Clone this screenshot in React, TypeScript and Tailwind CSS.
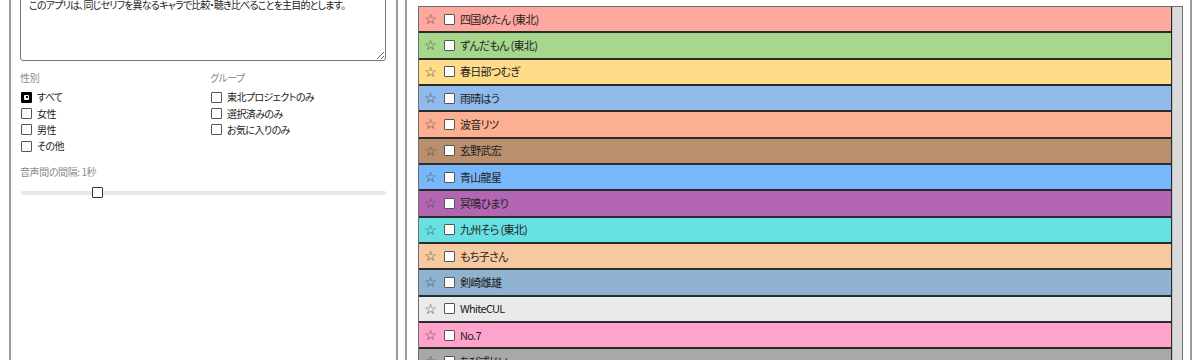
import React from "react";

const rows: { name: string; bg: string }[] = [
  { name: "四国めたん (東北)", bg: "bg-[#ffa8a0]" },
  { name: "ずんだもん (東北)", bg: "bg-[#a6d78d]" },
  { name: "春日部つむぎ", bg: "bg-[#ffdc87]" },
  { name: "雨晴はう", bg: "bg-[#8fbaea]" },
  { name: "波音リツ", bg: "bg-[#fdb091]" },
  { name: "玄野武宏", bg: "bg-[#b8906f]" },
  { name: "青山龍星", bg: "bg-[#78b7fa]" },
  { name: "冥鳴ひまり", bg: "bg-[#b266b2]" },
  { name: "九州そら (東北)", bg: "bg-[#66e0e0]" },
  { name: "もち子さん", bg: "bg-[#f7c9a0]" },
  { name: "剣崎雌雄", bg: "bg-[#8fb2d1]" },
  { name: "WhiteCUL", bg: "bg-[#eaeaea]" },
  { name: "No.7", bg: "bg-[#ffa3cc]" },
  { name: "ちび式じい", bg: "bg-[#a8a8a8]" },
  { name: "櫻歌ミコ", bg: "bg-[#ffb3c6]" },
];

const font =
  "font-['Noto_Sans_CJK_JP','Noto_Sans',sans-serif] [font-feature-settings:'palt']";

function Box({ checked = false }: { checked?: boolean }) {
  if (checked) {
    return (
      <span className="flex h-[11px] w-[11px] shrink-0 items-center justify-center rounded-[1px] bg-black">
        <span className="flex h-[5px] w-[5px] items-center justify-center rounded-[1px] bg-white">
          <span className="h-[2px] w-[2px] bg-black" />
        </span>
      </span>
    );
  }
  return (
    <span className="block h-[11px] w-[11px] shrink-0 rounded-[1px] border border-[#555] bg-white" />
  );
}

function Opt({ label, checked }: { label: string; checked?: boolean }) {
  return (
    <div className="flex h-[16.4px] items-center gap-[5px] pl-[1px]">
      <Box checked={checked} />
      <span className="text-[10px] leading-none tracking-[-0.6px] text-[#222]">{label}</span>
    </div>
  );
}

export default function App() {
  return (
    <div className={`h-[360px] w-[1200px] overflow-hidden bg-white ${font}`}>
      <div className="-mt-[20px] flex gap-[7px] pl-[9px] pr-[8px]">
        {/* Left panel */}
        <div className="h-[420px] w-[389px] shrink-0 border-2 border-[#9b9b9b] bg-white pl-[9px] pr-[10px] pt-[12px]">
          <textarea
            readOnly
            value="このアプリは、同じセリフを異なるキャラで比較・聴き比べることを主目的とします。"
            className={`block h-[67px] w-full resize-y rounded-[3px] border border-[#767676] bg-white px-[8px] py-[2px] text-[10px] leading-[16px] tracking-[-0.8px] text-[#222] outline-none ${font}`}
          />
          <div className="mt-[10px] grid grid-cols-[190px_1fr]">
            <div>
              <div className="h-[14px] text-[10px] leading-[14px] tracking-[-0.3px] text-[#8a8a8a]">性別</div>
              <div className="mt-[4px]">
                <Opt label="すべて" checked />
                <Opt label="女性" />
                <Opt label="男性" />
                <Opt label="その他" />
              </div>
            </div>
            <div>
              <div className="h-[14px] text-[10px] leading-[14px] tracking-[-0.6px] text-[#8a8a8a]">グループ</div>
              <div className="mt-[4px]">
                <Opt label="東北プロジェクトのみ" />
                <Opt label="選択済みのみ" />
                <Opt label="お気に入りのみ" />
              </div>
            </div>
          </div>
          <div className="mt-[10px] h-[14px] text-[10px] leading-[14px] tracking-[-0.4px] text-[#8a8a8a]">
            音声間の間隔: 1秒
          </div>
          <div className="relative mt-[8px] flex h-[12px] items-center pl-[1px]">
            <div className="h-[4px] w-full rounded-full bg-[#e5e7eb]" />
            <div className="absolute left-[72px] top-[0px] h-[11px] w-[11px] rounded-[1px] border border-[#333] bg-white" />
          </div>
        </div>

        {/* Right panel */}
        <div className="h-[420px] flex-1 border-2 border-[#9b9b9b] bg-white pl-[11px] pr-[7px] pt-[24px]">
          <div className="flex h-[400px] border border-[#6e6e6e]">
            <div className="flex-1 overflow-hidden">
              {rows.map((r) => (
                <div
                  key={r.name}
                  className={`box-border flex h-[26.33px] items-center border-b-2 border-r border-[#2b2b2b] pl-[5px] ${r.bg}`}
                >
                  <span className="w-[13px] text-center font-['DejaVu_Sans',sans-serif] text-[14px] leading-none text-[#444]">
                    ☆
                  </span>
                  <span className="ml-[7px]">
                    <Box />
                  </span>
                  <span className="ml-[5px] text-[11px] leading-none tracking-[-0.7px] text-[#222]">{r.name}</span>
                </div>
              ))}
            </div>
            <div className="w-[10px] border-l border-[#bdbdbd] bg-[#dadada]" />
          </div>
        </div>
      </div>
    </div>
  );
}
